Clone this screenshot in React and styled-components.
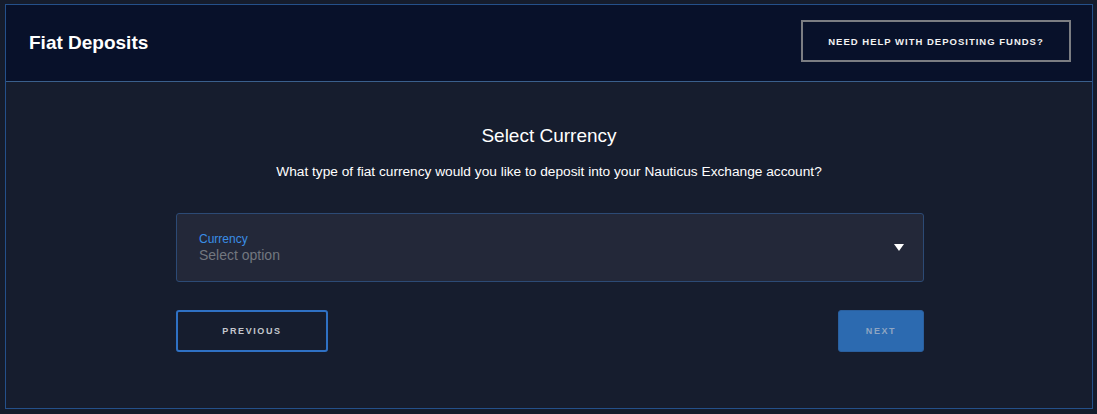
import React from "react";
import styled, { createGlobalStyle } from "styled-components";

const GlobalStyle = createGlobalStyle`
  html, body {
    margin: 0;
    background: #151c2c;
  }
  body {
    padding: 4px 4px 5px 5px;
    font-family: "Liberation Sans", Arial, sans-serif;
  }
`;

const Card = styled.div`
  width: 1088px;
  height: 405px;
  box-sizing: border-box;
  border: 1px solid #24508a;
  background: #161d2e;
  display: flex;
  flex-direction: column;
`;

const Header = styled.div`
  height: 77px;
  box-sizing: border-box;
  background: #08112a;
  border-bottom: 1px solid #3a5f8c;
  display: flex;
  align-items: center;
  justify-content: space-between;
  padding: 0 21px 0 23px;
`;

const Title = styled.h1`
  margin: 0;
  font-size: 19px;
  font-weight: 700;
  color: #fff;
`;

const HelpButton = styled.button`
  width: 270px;
  height: 42px;
  margin-top: -4px;
  background: transparent;
  border: 2px solid #7b7d82;
  color: #f2f2f2;
  font-family: inherit;
  font-size: 9.5px;
  font-weight: 700;
  letter-spacing: 1px;
  cursor: pointer;
`;

const Body = styled.div`
  flex: 1;
  display: flex;
  flex-direction: column;
  align-items: center;
  padding-top: 43px;
`;

const Heading = styled.h2`
  margin: 0;
  font-size: 19px;
  font-weight: 400;
  color: #fff;
`;

const Subtitle = styled.p`
  margin: 17px 0 0;
  font-size: 13.7px;
  color: #fff;
`;

const Form = styled.div`
  width: 748px;
  margin-top: 34px;
  margin-left: 2px;
  display: flex;
  flex-direction: column;
  gap: 28px;
`;

const Select = styled.div`
  height: 69px;
  box-sizing: border-box;
  background: #232839;
  border: 1px solid #2c4a75;
  border-radius: 3px;
  display: flex;
  align-items: center;
  justify-content: space-between;
  padding: 0 19px 0 22px;
  cursor: pointer;
`;

const FieldText = styled.div`
  display: flex;
  flex-direction: column;
  gap: 1px;
`;

const Label = styled.span`
  font-size: 12px;
  color: #3a8ee6;
`;

const Placeholder = styled.span`
  font-size: 14px;
  color: #72777f;
`;

const Caret = styled.span`
  width: 0;
  height: 0;
  border-left: 5px solid transparent;
  border-right: 5px solid transparent;
  border-top: 7px solid #fff;
  margin-top: 0;
`;

const Actions = styled.div`
  display: flex;
  justify-content: space-between;
`;

const NavButton = styled.button`
  height: 42px;
  width: ${p => p.$width}px;
  box-sizing: border-box;
  border-radius: 3px;
  font-family: inherit;
  font-size: 9px;
  font-weight: 700;
  letter-spacing: 1.6px;
  cursor: pointer;
  border: ${p => (p.$filled ? "1px solid #2a5f9e" : "2px solid #2f71c4")};
  background: ${p => (p.$filled ? "#2c6ab0" : "transparent")};
  color: ${p => (p.$filled ? "#8fa6c2" : "#c4c7cd")};
`;

export default function App() {
  return (
    <>
      <GlobalStyle />
      <Card>
        <Header>
          <Title>Fiat Deposits</Title>
          <HelpButton type="button">NEED HELP WITH DEPOSITING FUNDS?</HelpButton>
        </Header>
        <Body>
          <Heading>Select Currency</Heading>
          <Subtitle>
            What type of fiat currency would you like to deposit into your Nauticus Exchange account?
          </Subtitle>
          <Form>
            <Select>
              <FieldText>
                <Label>Currency</Label>
                <Placeholder>Select option</Placeholder>
              </FieldText>
              <Caret />
            </Select>
            <Actions>
              <NavButton type="button" $width={152}>PREVIOUS</NavButton>
              <NavButton type="button" $width={86} $filled>NEXT</NavButton>
            </Actions>
          </Form>
        </Body>
      </Card>
    </>
  );
}
